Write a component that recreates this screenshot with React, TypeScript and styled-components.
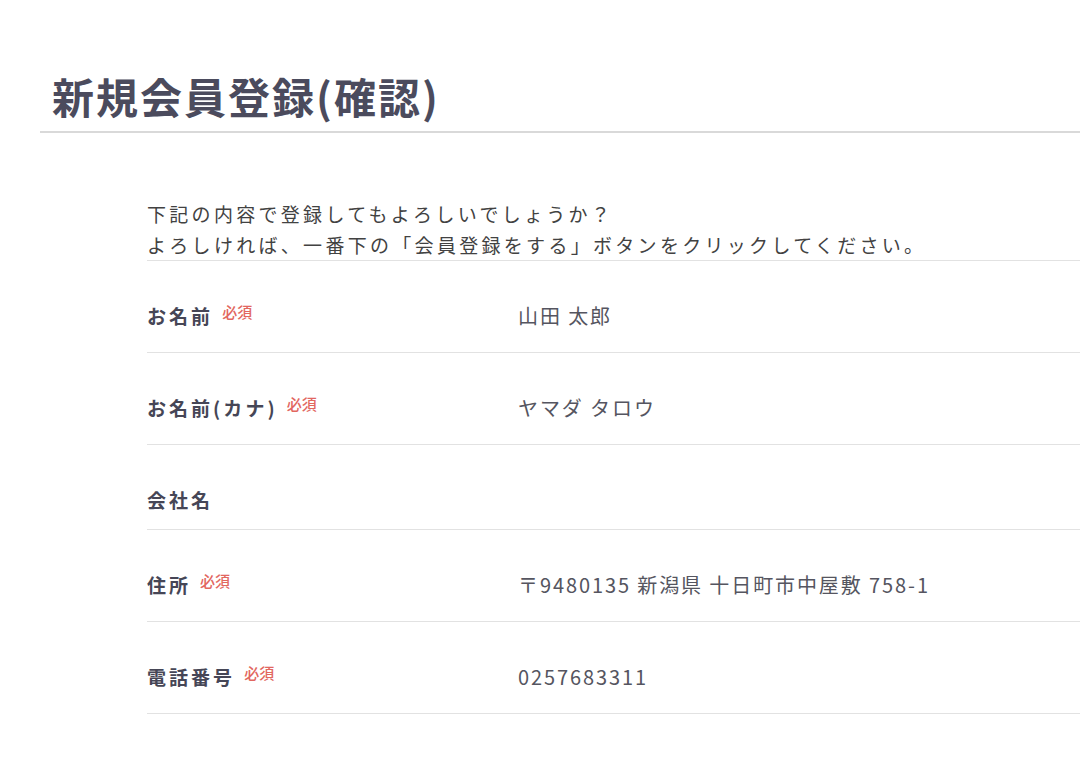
import React from "react";
import styled, { createGlobalStyle } from "styled-components";

const GlobalStyle = createGlobalStyle`
  html, body {
    margin: 0;
    padding: 0;
    background: #ffffff;
  }
  body {
    font-family: "Noto Sans CJK JP", "Noto Sans", sans-serif;
    color: #4a4a5a;
  }
`;

const Page = styled.div`
  width: 1080px;
  height: 770px;
  overflow: hidden;
  padding-top: 66px;
  box-sizing: border-box;
`;

const Header = styled.header`
  margin-left: 40px;
  padding: 0 0 5px 12px;
  border-bottom: 2px solid #d9d9d9;
`;

const Title = styled.h1`
  margin: 0;
  font-size: 42px;
  line-height: 60px;
  font-weight: 700;
  color: #4b4b5d;
  letter-spacing: 2px;
`;

const Content = styled.section`
  margin-left: 147px;
  margin-top: 65px;
`;

const Intro = styled.p`
  margin: 0;
  font-size: 19px;
  line-height: 31px;
  letter-spacing: 3.3px;
  color: #424242;
  border-bottom: 1px solid #e2e2e2;
`;

const Row = styled.div<{ $compact?: boolean }>`
  display: grid;
  grid-template-columns: 371px 1fr;
  align-items: center;
  padding: 43px 0 ${(p) => (p.$compact ? "17px" : "24px")};
  border-bottom: 1px solid #e2e2e2;
`;

const Label = styled.div`
  display: flex;
  align-items: flex-start;
  gap: 9px;
  font-size: 19px;
  line-height: 24px;
  font-weight: 700;
  letter-spacing: 0.16em;
  color: #464656;
`;

const Required = styled.span`
  font-size: 15px;
  line-height: 15px;
  font-weight: 500;
  letter-spacing: 0;
  color: #e2675f;
`;

const Value = styled.div`
  font-size: 20px;
  line-height: 24px;
  letter-spacing: 1.9px;
  color: #555560;
`;

const rows: { label: string; required: boolean; value: string }[] = [
  { label: "お名前", required: true, value: "山田 太郎" },
  { label: "お名前(カナ)", required: true, value: "ヤマダ タロウ" },
  { label: "会社名", required: false, value: "" },
  { label: "住所", required: true, value: "〒9480135 新潟県 十日町市中屋敷 758-1" },
  { label: "電話番号", required: true, value: "0257683311" },
];

export default function App() {
  return (
    <>
      <GlobalStyle />
      <Page>
        <Header>
          <Title>新規会員登録(確認)</Title>
        </Header>
        <Content>
          <Intro>
            下記の内容で登録してもよろしいでしょうか？
            <br />
            よろしければ、一番下の「会員登録をする」ボタンをクリックしてください。
          </Intro>
          {rows.map((r) => (
            <Row key={r.label} $compact={!r.value}>
              <Label>
                {r.label}
                {r.required && <Required>必須</Required>}
              </Label>
              <Value>{r.value}</Value>
            </Row>
          ))}
        </Content>
      </Page>
    </>
  );
}
